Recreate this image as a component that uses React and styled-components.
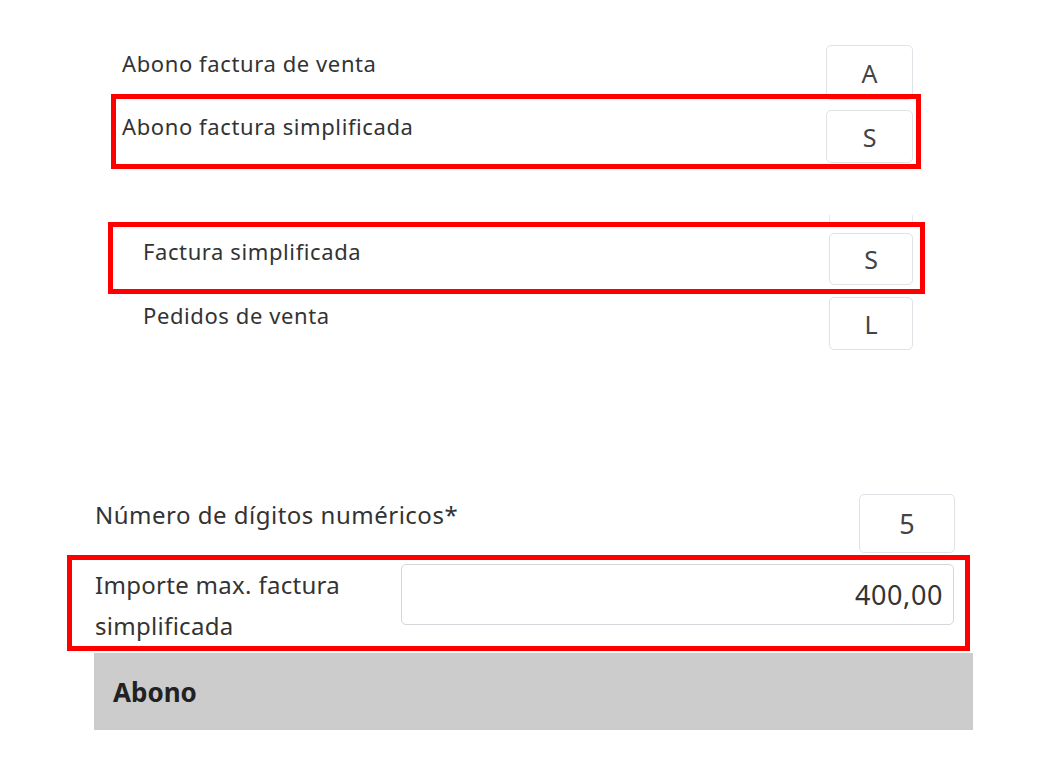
import React from 'react'
import styled, { createGlobalStyle } from 'styled-components'

const GlobalStyle = createGlobalStyle`
  body {
    margin: 0;
    background: #ffffff;
    font-family: 'Noto Sans', 'Open Sans', sans-serif;
    color: #333333;
  }
`

const Page = styled.div`
  width: 1042px;
  height: 781px;
  padding-top: 45px;
  box-sizing: border-box;
  display: flex;
  flex-direction: column;
  overflow: hidden;
`

const Group = styled.div`
  display: flex;
  flex-direction: column;
  margin-left: ${p => p.left}px;
  width: ${p => p.width}px;
  margin-top: ${p => p.top || 0}px;
`

const Row = styled.div`
  display: flex;
  justify-content: space-between;
  align-items: flex-start;
  height: ${p => (p.h ? `${p.h}px` : 'auto')};
  padding: ${p => p.pad || '0'};
  margin-top: ${p => p.top || 0}px;
`

const Highlight = styled.div`
  border: 5px solid #ff0000;
  display: flex;
  flex-direction: column;
  padding: ${p => p.pad || '0'};
  margin-top: ${p => p.top || 0}px;
`

const Label = styled.span`
  font-size: ${p => p.size || 22}px;
  letter-spacing: ${p => p.ls ?? 0.6}px;
  line-height: ${p => p.lh || 26}px;
  padding-top: ${p => p.offset || 0}px;
  color: #333333;
  width: ${p => (p.w ? `${p.w}px` : 'auto')};
`

const CodeBox = styled.div`
  width: ${p => p.w || 87}px;
  height: ${p => p.h || 54}px;
  flex-shrink: 0;
  box-sizing: border-box;
  border: 1px solid #dfe3e8;
  border-radius: 5px;
  background: #ffffff;
  display: flex;
  align-items: center;
  justify-content: center;
  font-size: ${p => p.size || 25}px;
  color: #444444;
`

const Ghost = styled.div`
  display: flex;
  justify-content: flex-end;
  padding-right: 12px;
  margin-top: 46px;
  height: 7px;
`

const GhostSides = styled.div`
  width: 84px;
  box-sizing: border-box;
  border-left: 1px solid #e6e9ed;
  border-right: 1px solid #e6e9ed;
`

const AmountInput = styled.div`
  width: 553px;
  height: 61px;
  box-sizing: border-box;
  border: 1px solid #d3d7dc;
  border-radius: 5px;
  display: flex;
  align-items: center;
  justify-content: flex-end;
  padding-right: 10px;
  font-size: 27px;
  letter-spacing: 0.6px;
  color: #333333;
`

const SectionBar = styled.div`
  margin-left: 27px;
  margin-top: 2px;
  width: 879px;
  height: 77px;
  background: #cccccc;
  display: flex;
  align-items: center;
  padding-left: 19px;
  box-sizing: border-box;
  font-size: 26px;
  font-weight: 700;
  color: #222222;
`

const App = () => {
  return (
    <>
      <GlobalStyle />
      <Page>
        <Group left={111} width={810}>
          <Row h={49} pad="0 8px 0 11px">
            <Label offset={5}>Abono factura de venta</Label>
            <CodeBox h={55}>A</CodeBox>
          </Row>
          <Highlight pad="11px 3px 1px 6px">
            <Row>
              <Label offset={3}>Abono factura simplificada</Label>
              <CodeBox h={53}>S</CodeBox>
            </Row>
          </Highlight>
        </Group>

        <Group left={108} width={817}>
          <Ghost>
            <GhostSides />
          </Ghost>
          <Highlight pad="6px 7px 4px 30px">
            <Row>
              <Label offset={5}>Factura simplificada</Label>
              <CodeBox w={84} h={52}>S</CodeBox>
            </Row>
          </Highlight>
          <Row top={3} pad="0 12px 0 35px">
            <Label offset={5}>Pedidos de venta</Label>
            <CodeBox w={84} h={53}>L</CodeBox>
          </Row>
        </Group>

        <Group left={67} width={903} top={144}>
          <Row pad="0 15px 0 28px">
            <Label size={24} ls={0.5} lh={34} offset={4}>Número de dígitos numéricos*</Label>
            <CodeBox w={96} h={59} size={27}>5</CodeBox>
          </Row>
          <Highlight top={2} pad="4px 11px 0 23px">
            <Row>
              <Label size={24} ls={0.3} lh={41} offset={0} w={306}>
                Importe max. factura simplificada
              </Label>
              <AmountInput>400,00</AmountInput>
            </Row>
          </Highlight>
          <SectionBar>Abono</SectionBar>
        </Group>
      </Page>
    </>
  )
}

export default App
